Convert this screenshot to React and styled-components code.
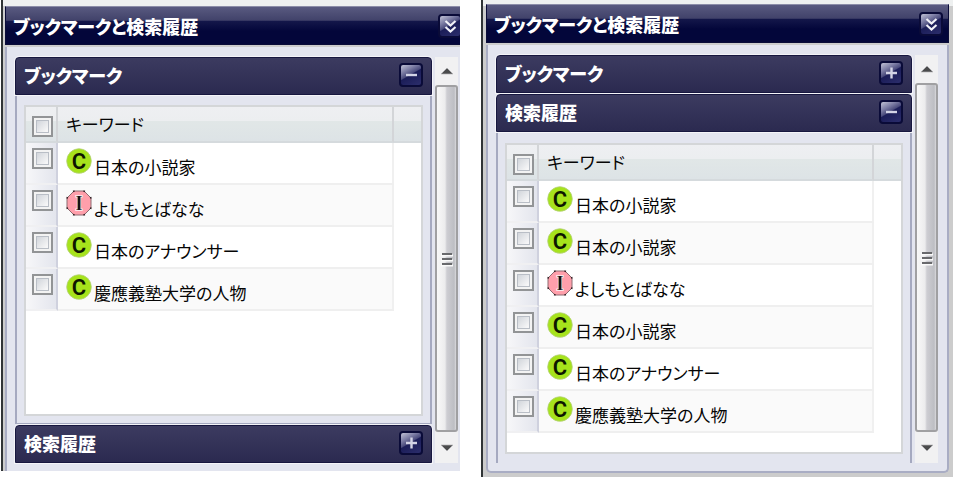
import React, { useId, useState } from "react";
import styled, { createGlobalStyle } from "styled-components";

const GlobalStyle = createGlobalStyle`
  *, *::before, *::after { box-sizing: border-box; }
  body {
    margin: 0;
    background: #fff;
    color: #050505;
    font-family: "Noto Sans CJK JP", "Liberation Sans", sans-serif;
    font-feature-settings: "palt";
  }
  button { padding: 0; font: inherit; cursor: pointer; }
`;

const Page = styled.main`
  display: grid;
  grid-template-columns: 459fr 472fr;
  column-gap: 21px;
  align-items: start;
  padding-left: 1px;
`;

const Window = styled.section`
  overflow: hidden;
  border-left: 2px solid #303436;
  padding: ${(p) => (p.$cropped ? "6px 0 0 2px" : "4px 4px 5px 3px")};
  background: #cccccc linear-gradient(#eef0f0, #eef0f0) no-repeat 0 0 / 100% 6px;
`;

const TitleBar = styled.header`
  display: flex;
  align-items: center;
  justify-content: space-between;
  height: 39px;
  margin-right: ${(p) => (p.$cropped ? "-8px" : "0")};
  padding: 0 5px 0 7px;
  border: 1px solid #0a0c38;
  border-top-color: #8c8da8;
  background: linear-gradient(#595a80 0, #41426a 36%, #14174a 38%, #03063a 65%, #03063a 100%);
`;

const Title = styled.h1`
  margin: 0;
  color: #fff;
  font-size: 18px;
  line-height: 24px;
  font-weight: 900;
  white-space: nowrap;
`;

const Client = styled.div`
  display: grid;
  grid-template-columns: minmax(0, 1fr) 23px;
  column-gap: 3px;
  margin-top: 2px;
  padding: ${(p) => (p.$cropped ? "10px 2px 8px 8px" : "10px 9px 8px 8px")};
  border: solid #a9adc4;
  border-width: ${(p) => (p.$cropped ? "0 0 0 2px" : "0 2px 2px 2px")};
  border-radius: ${(p) => (p.$cropped ? "0" : "0 0 5px 5px")};
  background: #e3e5ef;
`;

const Accordion = styled.div`
  display: flex;
  flex-direction: column;
  gap: 1px;
`;

const Bar = styled.div`
  display: flex;
  align-items: center;
  justify-content: space-between;
  height: 38px;
  padding: 0 8px 2px 8px;
  border: 1px solid #17173f;
  border-radius: 4px 4px 0 0;
  background: linear-gradient(#3c3b60, #2b2a50);
  box-shadow: 0 0 0 1px #f4f4f8;
`;

const BarTitle = styled.h2`
  margin: 0;
  color: #fff;
  font-size: 18px;
  line-height: 24px;
  font-weight: 900;
  white-space: nowrap;
`;

const ToolButton = styled.button`
  display: grid;
  place-items: center;
  flex: none;
  width: 24px;
  height: 24px;
  border: 2px solid #0a0b38;
  border-radius: 4px;
  background: linear-gradient(150deg, #c2c3d6 0, #7c7da4 28%, #4b4c7d 46%, #1b1d58 50%, #2c2e6c 100%);
`;

const PanelBody = styled.div`
  padding: ${(p) => (p.$last ? "10px 7px 9px 7px" : "9px 7px 7px 7px")};
  border: solid #a5a9c0;
  border-width: 0 2px;
  border-bottom: ${(p) => (p.$last ? "0" : "1px solid #a5a9c0")};
`;

const ListBox = styled.div`
  min-height: 311px;
  border: 2px solid #d4d6d8;
  background: #fff;
`;

const Table = styled.table`
  width: 100%;
  border-collapse: separate;
  border-spacing: 0;
  table-layout: fixed;
`;

const HeadCell = styled.th`
  width: ${(p) => p.$width || "auto"};
  height: 36px;
  padding: ${(p) => (p.$check ? "5px 0 0 6px" : "0 0 0 8px")};
  border-bottom: 2px solid #d5dadd;
  border-right: ${(p) => (p.$divided ? "2px solid #d3d5d8" : "0")};
  background: linear-gradient(#eeeff2 0, #eceef0 40%, #e1e7e7 42%, #dde3e6 100%);
  text-align: left;
  font-size: 17px;
  line-height: 24px;
  font-weight: 400;
`;

const CheckCell = styled.td`
  height: 42px;
  padding: 5px 0 0 6px;
  border-right: 2px solid #cfd1de;
  border-bottom: 2px solid #f0f0f2;
  background: linear-gradient(90deg, #f7f7f9, #e3e5ed);
  vertical-align: top;
`;

const EntryCell = styled.td`
  height: 42px;
  padding: 5px 0 0 8px;
  border-right: 2px solid #f0f0f0;
  border-bottom: 2px solid #efefef;
  background: ${(p) => (p.$odd ? "#fafafa" : "#fff")};
  vertical-align: top;
`;

const Entry = styled.label`
  display: flex;
  gap: 2px;
`;

const EntryText = styled.span`
  padding-top: 7px;
  font-size: 17px;
  line-height: 24px;
  white-space: nowrap;
`;

const Check = styled.input`
  display: block;
  appearance: none;
  width: 21px;
  height: 21px;
  margin: 0;
  border: 2px solid #929496;
  background: linear-gradient(135deg, #c6cbd2, #f6f6f7 75%);
  box-shadow: inset 0 0 0 2px #f3f3f3, inset 0 0 0 3px #b9bec6;
  &:checked { background: #4c5a86; }
`;

const ScrollTrack = styled.div`
  display: flex;
  flex-direction: column;
  background: #f0f0f1;
`;

const ArrowButton = styled.button`
  display: grid;
  place-items: center;
  height: ${(p) => (p.$down ? "31px" : "28px")};
  border: 0;
  background: #f1f1f2;
`;

const Thumb = styled.div`
  display: grid;
  place-items: center;
  flex: 1;
  border: 2px solid #a0a0a2;
  border-radius: 3px;
  background: linear-gradient(90deg, #f8f8f8 0, #ececed 42%, #cdcdd2 52%, #bdbec3 90%, #dadadd 100%);
`;

const Icon = styled.svg`
  display: block;
  flex: none;
`;

function ClassIcon() {
  return (
    <Icon width="26" height="26" viewBox="0 0 26 26" aria-hidden="true">
      <circle cx="13" cy="13" r="12.3" fill="#a6e31c" stroke="#b4cf7a" strokeWidth="0.8" />
      <text x="13" y="20.5" textAnchor="middle" fontFamily="Roboto" fontWeight="600" fontSize="22" fill="#0d1600">C</text>
    </Icon>
  );
}

function InstanceIcon() {
  return (
    <Icon width="26" height="26" viewBox="0 0 26 26" aria-hidden="true">
      <path d="M8 1H18L25 8V18L18 25H8L1 18V8Z" fill="#ff9fab" stroke="#8d6a70" strokeWidth="1" />
      <path d="M7 1.5L8.5 1M17.5 1L19 1.5M24.5 7L25 8.5M25 17.5L24.5 19M19 24.5L17.5 25M8.5 25L7 24.5M1.5 19L1 17.5M1 8.5L1.5 7" stroke="#302025" strokeWidth="1.6" />
      <text x="13" y="20" textAnchor="middle" fontFamily="Liberation Serif" fontWeight="400" fontSize="21" fill="#171114" stroke="#f9e6e9" strokeWidth="2" paintOrder="stroke">I</text>
      <path d="M13 7V19" stroke="#171114" strokeWidth="2.6" />
    </Icon>
  );
}

function ToggleIcon({ open }) {
  return (
    <Icon width="18" height="18" viewBox="0 0 18 18" aria-hidden="true">
      <path d={open ? "M4 9H15" : "M4 9H15M9.5 3.5V14.5"} fill="none" stroke="#d3d4e6" strokeWidth="2.4" />
    </Icon>
  );
}

function ChevronsIcon() {
  return (
    <Icon width="18" height="18" viewBox="0 0 18 18" aria-hidden="true">
      <path d="M4.5 4L9.5 8.5L14.5 4M4.5 10L9.5 14.5L14.5 10" fill="none" stroke="#f1f1f8" strokeWidth="2.2" />
    </Icon>
  );
}

function ArrowIcon({ down }) {
  return (
    <Icon width="14" height="8" viewBox="0 0 14 8" aria-hidden="true">
      <path d={down ? "M1 1H13L7 7Z" : "M1 7H13L7 1Z"} fill="#4a4b4c" stroke="#b5b5b7" strokeWidth="0.7" />
    </Icon>
  );
}

function GripIcon() {
  return (
    <Icon width="14" height="16" viewBox="0 0 14 16" aria-hidden="true">
      <path d="M1 4.5H13M1 9.5H13M1 14.5H13" stroke="#fafafa" strokeWidth="2" />
      <path d="M2 3H12M2 8H12M2 13H12" stroke="#68696c" strokeWidth="2" />
    </Icon>
  );
}

function KeywordList({ entries }) {
  const id = useId();
  return (
    <ListBox>
      <Table>
        <thead>
          <tr>
            <HeadCell $check $divided $width="32px">
              <Check type="checkbox" id={`${id}-all`} />
            </HeadCell>
            <HeadCell $divided>
              <label htmlFor={`${id}-all`}>キーワード</label>
            </HeadCell>
            <HeadCell $width="27px" />
          </tr>
        </thead>
        <tbody>
          {entries.map((entry, i) => (
            <tr key={i}>
              <CheckCell>
                <Check type="checkbox" id={`${id}-${i}`} />
              </CheckCell>
              <EntryCell $odd={i % 2 === 1}>
                <Entry htmlFor={`${id}-${i}`}>
                  {entry.kind === "class" ? <ClassIcon /> : <InstanceIcon />}
                  <EntryText>{entry.text}</EntryText>
                </Entry>
              </EntryCell>
            </tr>
          ))}
        </tbody>
      </Table>
    </ListBox>
  );
}

function BookmarkWindow({ cropped, initial, bookmarks, history }) {
  const [open, setOpen] = useState(initial);
  const panels = [
    { key: "bookmarks", title: "ブックマーク", entries: bookmarks },
    { key: "history", title: "検索履歴", entries: history },
  ];
  return (
    <Window $cropped={cropped}>
      <TitleBar $cropped={cropped}>
        <Title>ブックマークと検索履歴</Title>
        <ToolButton type="button" aria-label="折りたたむ">
          <ChevronsIcon />
        </ToolButton>
      </TitleBar>
      <Client $cropped={cropped}>
        <Accordion>
          {panels.map((panel, i) => (
            <React.Fragment key={panel.key}>
              <Bar>
                <BarTitle>{panel.title}</BarTitle>
                <ToolButton
                  type="button"
                  aria-label={panel.title}
                  aria-expanded={open === panel.key}
                  onClick={() => setOpen(panel.key)}
                >
                  <ToggleIcon open={open === panel.key} />
                </ToolButton>
              </Bar>
              {open === panel.key && (
                <PanelBody $last={i === panels.length - 1}>
                  <KeywordList entries={panel.entries} />
                </PanelBody>
              )}
            </React.Fragment>
          ))}
        </Accordion>
        <ScrollTrack>
          <ArrowButton type="button" aria-label="上へ">
            <ArrowIcon />
          </ArrowButton>
          <Thumb>
            <GripIcon />
          </Thumb>
          <ArrowButton type="button" aria-label="下へ" $down>
            <ArrowIcon down />
          </ArrowButton>
        </ScrollTrack>
      </Client>
    </Window>
  );
}

const novelists = { kind: "class", text: "日本の小説家" };
const yoshimoto = { kind: "instance", text: "よしもとばなな" };
const announcers = { kind: "class", text: "日本のアナウンサー" };
const keio = { kind: "class", text: "慶應義塾大学の人物" };

const bookmarks = [novelists, yoshimoto, announcers, keio];
const searchHistory = [novelists, novelists, yoshimoto, novelists, announcers, keio];

export default function App() {
  return (
    <>
      <GlobalStyle />
      <Page>
        <BookmarkWindow cropped initial="bookmarks" bookmarks={bookmarks} history={searchHistory} />
        <BookmarkWindow initial="history" bookmarks={bookmarks} history={searchHistory} />
      </Page>
    </>
  );
}
